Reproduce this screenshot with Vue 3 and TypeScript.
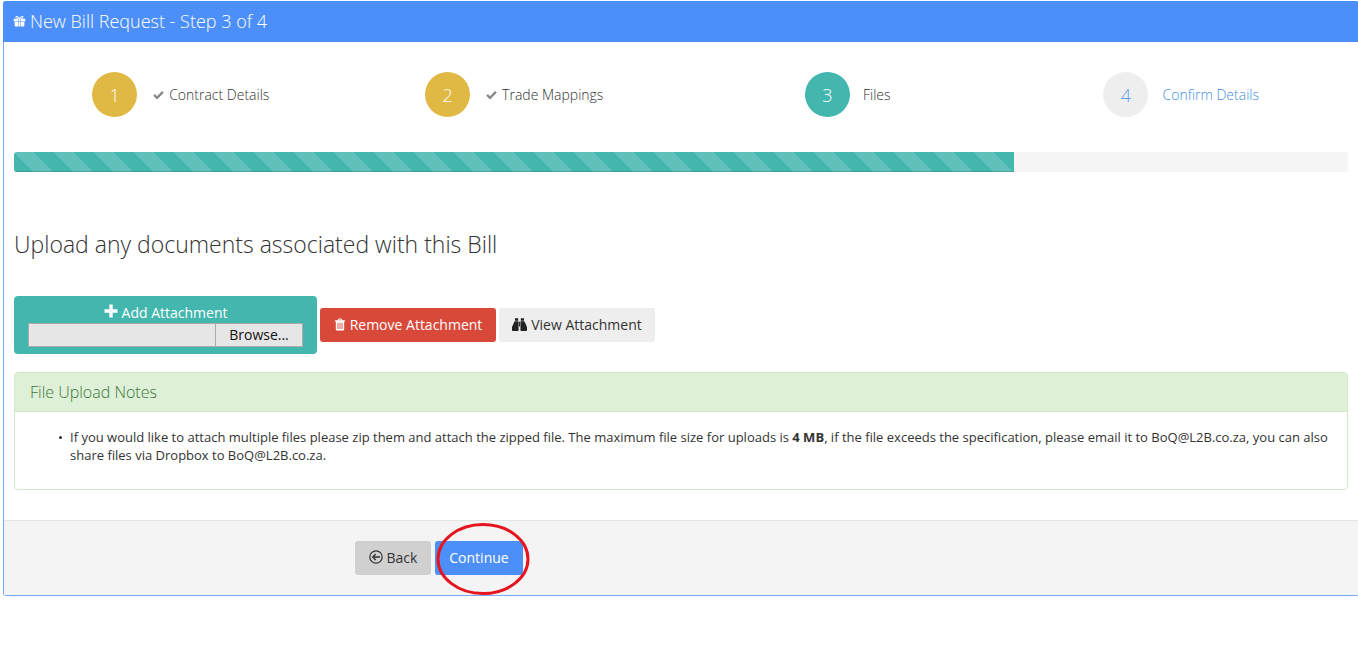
<script setup lang="ts">
interface Step {
  num: number;
  label: string;
  state: 'done' | 'active' | 'todo';
}

const steps: Step[] = [
  { num: 1, label: 'Contract Details', state: 'done' },
  { num: 2, label: 'Trade Mappings', state: 'done' },
  { num: 3, label: 'Files', state: 'active' },
  { num: 4, label: 'Confirm Details', state: 'todo' },
];

const progress = 74.95;
</script>

<template>
  <div class="page">
    <section class="panel">
      <header class="panel-heading">
        <svg class="gift" viewBox="0 0 16 16" fill="currentColor">
          <path d="M1 4.500h5.600V8H1zM9.400 4.500H15V8H9.400zM7.200 4.500h1.600V8H7.200zM2 8.600h4.600V14H3a1 1 0 0 1-1-1zM9.400 8.600H14V13a1 1 0 0 1-1 1H9.400zM7.200 8.600h1.600V14H7.200z" />
          <path fill-rule="evenodd" d="M8 4.500C6.500 4.500 3.400 4.600 3.100 3 2.900 1.600 4 1 5 1.200 6.400 1.500 7.500 3 8 3.800 8.500 3 9.600 1.500 11 1.200 12 1 13.100 1.600 12.900 3 12.600 4.600 9.500 4.500 8 4.500zM6.600 3.500C6 2.800 5.300 2.300 4.800 2.300 4.300 2.300 4.100 2.700 4.300 3.100 4.500 3.500 5.700 3.500 6.600 3.500zM9.400 3.500C10.300 3.500 11.500 3.500 11.700 3.100 11.900 2.700 11.700 2.300 11.200 2.300 10.700 2.300 10 2.800 9.400 3.500z" />
        </svg>
        <span class="heading-text">New Bill Request - Step 3 of 4</span>
      </header>

      <div class="panel-body">
        <ol class="steps">
          <li v-for="step in steps" :key="step.num" class="step" :class="step.state">
            <span class="circle">{{ step.num }}</span>
            <span class="step-label">
              <svg v-if="step.state === 'done'" class="check" viewBox="0 0 14 14" fill="currentColor">
                <path d="M5.100 12.200.3 7.400l2.200-2.200 2.600 2.600 6.400-6.400 2.200 2.200z" />
              </svg>
              <span class="step-text">{{ step.label }}</span>
            </span>
          </li>
        </ol>

        <div class="progress">
          <div class="progress-bar" :style="{ width: progress + '%' }"></div>
        </div>

        <h3 class="title">Upload any documents associated with this Bill</h3>

        <div class="actions">
          <div class="add-box">
            <div class="add-label">
              <svg class="plus" viewBox="0 0 14 14" fill="currentColor">
                <path d="M5.300.5h3.400v4.800h4.800v3.400H8.700v4.800H5.300V8.700H.5V5.300h4.800z" />
              </svg>
              Add Attachment
            </div>
            <div class="file-input">
              <span class="file-name"></span>
              <span class="browse">Browse...</span>
            </div>
          </div>
          <button class="btn btn-red" type="button">
            <svg class="icon" viewBox="0 0 12 14" fill="currentColor">
              <path fill-rule="evenodd" d="M.5 2.500h2.900l.7-1.400c.2-.4.500-.6.900-.6h2c.4 0 .7.200.9.600l.7 1.400h2.900v1.200h-1V12c0 .9-.5 1.500-1.200 1.500H2.700C2 13.500 1.500 12.900 1.500 12V3.700h-1zM4.700 2.500h2.600l-.4-.8H5.100zM3.300 5v6.800h1V5zM5.500 5v6.800h1V5zM7.700 5v6.800h1V5z" />
            </svg>
            Remove Attachment
          </button>
          <button class="btn btn-light" type="button">
            <svg class="icon binoculars" viewBox="0 0 16 15" fill="currentColor">
              <path d="M3.200.8h3.400v2.700H3.200zM9.400.8h3.400v2.700H9.400zM2.800 4h4.200v9.700c0 .5-.3.800-.8.800H.8c-.5 0-.8-.3-.8-.8v-3.500zM9 4h4.200L16 10.200v3.500c0 .5-.3.800-.8.800H9.800c-.5 0-.8-.3-.8-.8zM7.500 4.500h1V9.500h-1z" />
            </svg>
            View Attachment
          </button>
        </div>

        <div class="notes">
          <div class="notes-heading">File Upload Notes</div>
          <div class="notes-body">
            <ul>
              <li>
                If you would like to attach multiple files please zip them and attach the zipped file. The maximum file size for uploads is <strong>4 MB</strong>, if the file exceeds the specification, please email it to BoQ@L2B.co.za, you can also share files via Dropbox to BoQ@L2B.co.za.
              </li>
            </ul>
          </div>
        </div>
      </div>

      <footer class="panel-footer">
        <button class="btn btn-back" type="button">
          <svg class="icon back-icon" viewBox="0 0 14 14" fill="none" stroke="currentColor">
            <circle cx="7" cy="7" r="6.200" stroke-width="1.200" />
            <path d="M11 7H4M6.700 4.100 3.800 7l2.900 2.900" stroke-width="1.400" />
          </svg>
          Back
        </button>
        <button class="btn btn-blue" type="button">Continue</button>
        <svg class="highlight" viewBox="0 0 96 74" fill="none">
          <ellipse cx="48" cy="37" rx="45" ry="34.500" stroke="#e6141f" stroke-width="3" />
        </svg>
      </footer>
    </section>
  </div>
</template>

<style scoped>
.page {
  height: 648px;
  padding: 1px 0 0 3px;
  box-sizing: border-box;
  overflow: hidden;
  background: #fff;
  font-family: "Open Sans", "Liberation Sans", sans-serif;
  font-size: 14px;
  color: #333;
}

.panel {
  width: 1356px;
  height: 595px;
  box-sizing: border-box;
  display: flex;
  flex-direction: column;
  border: 1px solid #7aa8f5;
  border-top: 0;
  border-radius: 3px;
}

.panel-heading {
  height: 41px;
  flex: none;
  display: flex;
  align-items: center;
  gap: 4px;
  padding-left: 10px;
  margin: 0 -1px;
  background: #4d8ff8;
  color: #fff;
  font-size: 18px;
  font-weight: 300;
  border-radius: 3px 3px 0 0;
}

.heading-text {
  margin-top: -2px;
}

.gift {
  width: 13px;
  height: 13px;
}

.panel-body {
  flex: 1;
  padding: 30px 10px 0;
}

.steps {
  display: grid;
  grid-template-columns: repeat(4, 1fr);
  margin: 0;
  padding: 0;
  list-style: none;
}

.step {
  display: flex;
  align-items: center;
  justify-content: center;
  gap: 16px;
}

.circle {
  width: 45px;
  height: 45px;
  display: flex;
  align-items: center;
  justify-content: center;
  border-radius: 50%;
  font-size: 18px;
  font-weight: 300;
  color: #fff;
}

.step-label {
  display: flex;
  align-items: center;
  gap: 5px;
  color: #333;
  font-weight: 300;
}

.step-text {
  font-size: 14px;
}

.check {
  width: 11px;
  height: 11px;
  color: #888;
  margin-top: 1px;
}

.done .circle {
  background: #e0b944;
}

.active .circle {
  background: #43b6ae;
}

.active .step-text {
  margin-left: -3px;
}

.todo .circle {
  background: #eee;
  color: #5a9ee6;
}

.todo .step-text {
  color: #3f8fe0;
  margin-left: -2px;
}

.progress {
  height: 20px;
  margin-top: 35px;
  border-radius: 3px;
  background: #f5f5f5;
  overflow: hidden;
}

.progress-bar {
  height: 100%;
  background-color: #43b6ae;
  background-image: linear-gradient(45deg, rgba(255, 255, 255, 0.15) 25%, transparent 25%, transparent 50%, rgba(255, 255, 255, 0.15) 50%, rgba(255, 255, 255, 0.15) 75%, transparent 75%, transparent);
  background-size: 40px 40px;
  box-shadow: inset 0 -1px 0 rgba(0, 0, 0, 0.15);
}

.title {
  margin: 57px 0 0;
  font-size: 23px;
  font-weight: 300;
  line-height: 30px;
  color: #333;
}

.actions {
  display: flex;
  align-items: center;
  gap: 3px;
  margin-top: 37px;
}

.add-box {
  width: 303px;
  height: 58px;
  box-sizing: border-box;
  padding: 6px 14px 0;
  border-radius: 4px;
  background: #43b6ae;
  color: #fff;
}

.add-label {
  display: flex;
  align-items: center;
  justify-content: center;
  gap: 4px;
  height: 21px;
}

.plus {
  width: 14px;
  height: 14px;
  margin-top: -3px;
}

.file-input {
  display: flex;
  height: 24px;
  box-sizing: border-box;
  border: 1px solid #ababab;
  background: #e6e6e6;
  color: #111;
}

.file-name {
  flex: 1;
}

.browse {
  width: 87px;
  box-sizing: border-box;
  border-left: 1px solid #ababab;
  text-align: center;
  line-height: 21px;
}

.btn {
  display: inline-flex;
  align-items: center;
  justify-content: center;
  gap: 4px;
  height: 34px;
  padding: 0 0 2px;
  border: 0;
  border-radius: 3px;
  font-family: inherit;
  font-size: 14px;
}

.btn-red {
  width: 176px;
  background: #d9493a;
  color: #fff;
}

.btn-light {
  width: 156px;
  background: #eee;
  color: #333;
}

.icon {
  width: 12px;
  height: 13px;
  flex: none;
}

.binoculars {
  width: 15px;
  height: 15px;
  color: #222;
}

.back-icon {
  width: 14px;
  height: 14px;
}

.notes {
  height: 118px;
  box-sizing: border-box;
  margin-top: 18px;
  border: 1px solid #d6e9c6;
  border-radius: 4px;
}

.notes-heading {
  height: 39px;
  box-sizing: border-box;
  padding-left: 15px;
  border-bottom: 1px solid #d6e9c6;
  background: #dff0d8;
  color: #3c763d;
  font-size: 16px;
  font-weight: 300;
  line-height: 38px;
}

.notes-body {
  padding: 16px 15px;
  font-size: 13px;
  line-height: 18px;
}

.notes-body ul {
  margin: 0;
  padding-left: 40px;
  list-style: none;
}

.notes-body li {
  position: relative;
}

.notes-body li::before {
  content: "";
  position: absolute;
  left: -11px;
  top: 8px;
  width: 3px;
  height: 3px;
  border-radius: 50%;
  background: #333;
}

.panel-footer {
  position: relative;
  flex: none;
  height: 75px;
  box-sizing: border-box;
  display: flex;
  align-items: center;
  gap: 4px;
  padding-left: 351px;
  border-top: 1px solid #e4e4e4;
  background: #f4f4f4;
}

.btn-back {
  width: 76px;
  background: #d0d0d0;
  color: #333;
}

.btn-blue {
  width: 88px;
  background: #4d8ff8;
  color: #fff;
}

.highlight {
  position: absolute;
  left: 431px;
  top: 1px;
  width: 96px;
  height: 74px;
}
</style>
